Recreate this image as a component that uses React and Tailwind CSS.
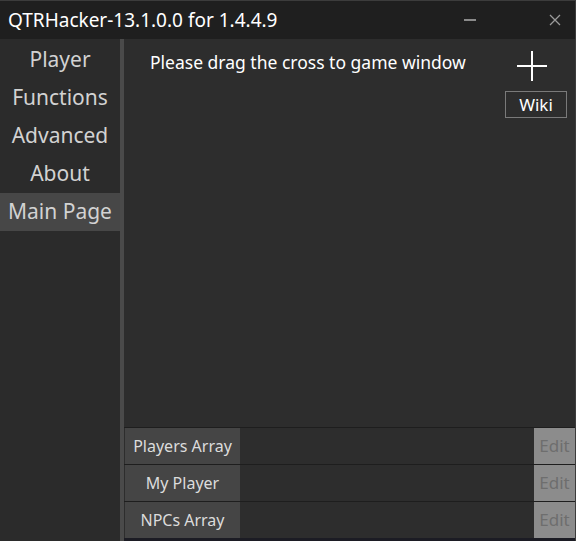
import React from "react";

const font = { fontFamily: '"Noto Sans", "Open Sans", sans-serif' };

const tabs = ["Player", "Functions", "Advanced", "About", "Main Page"];
const rows = ["Players Array", "My Player", "NPCs Array"];

export default function App() {
  return (
    <div style={font} className="w-[576px] h-[541px] flex flex-col bg-[#2d2d2d] border-t border-r border-[#3c3c3c] overflow-hidden">
      <div className="h-[38px] shrink-0 flex items-center bg-[#1f1f1f]">
        <div className="pl-[8px] text-[19px] text-white leading-none flex-1">QTRHacker-13.1.0.0 for 1.4.4.9</div>
        <div className="w-[12px] h-[2px] bg-[#8a8a8a] mr-[73px]" />
        <svg width="12" height="12" viewBox="0 0 12 12" className="mr-[14px]">
          <path d="M1 1 L11 11 M11 1 L1 11" stroke="#9a9a9a" strokeWidth="1.3" />
        </svg>
      </div>
      <div className="flex-1 flex min-h-0">
        <div className="w-[120px] bg-[#2b2b2b] pt-[2px] flex flex-col">
          {tabs.map((t) => (
            <div key={t} className={"h-[38px] flex items-center justify-center text-[21px] text-[#d2d2d2] " + (t === "Main Page" ? "bg-[#474747]" : "")}>
              {t}
            </div>
          ))}
        </div>
        <div className="w-[4px] bg-[#4a4a4a]" />
        <div className="flex-1 flex flex-col border-b-[3px] border-[#1c1c24]">
          <div className="flex-1 flex pl-[26px] pr-[8px] pt-[11px]">
            <div className="flex-1 text-[17.5px] text-white leading-[24px]">Please drag the cross to game window</div>
            <div className="flex flex-col items-center w-[62px]">
              <svg width="32" height="32" viewBox="0 0 32 32" className="mr-[8px]">
                <path d="M16 1 V31 M1 16 H31" stroke="#ffffff" strokeWidth="2" />
              </svg>
              <div className="mt-[9px] w-[62px] h-[27px] border border-[#7a7a7a] flex items-center justify-center text-[17px] text-white">Wiki</div>
            </div>
          </div>
          <div className="flex flex-col">
            {rows.map((r) => (
              <div key={r} className="h-[37px] flex pl-[1px] border-t border-[#1e1e1e]">
                <div className="w-[115px] bg-[#454545] flex items-center justify-center text-[16px] text-[#dcdcdc]">{r}</div>
                <div className="flex-1" />
                <div className="w-[41px] bg-[#8c8c8c] flex items-center justify-center text-[17px] text-[#6e6e6e]">Edit</div>
              </div>
            ))}
          </div>
        </div>
      </div>
    </div>
  );
}
